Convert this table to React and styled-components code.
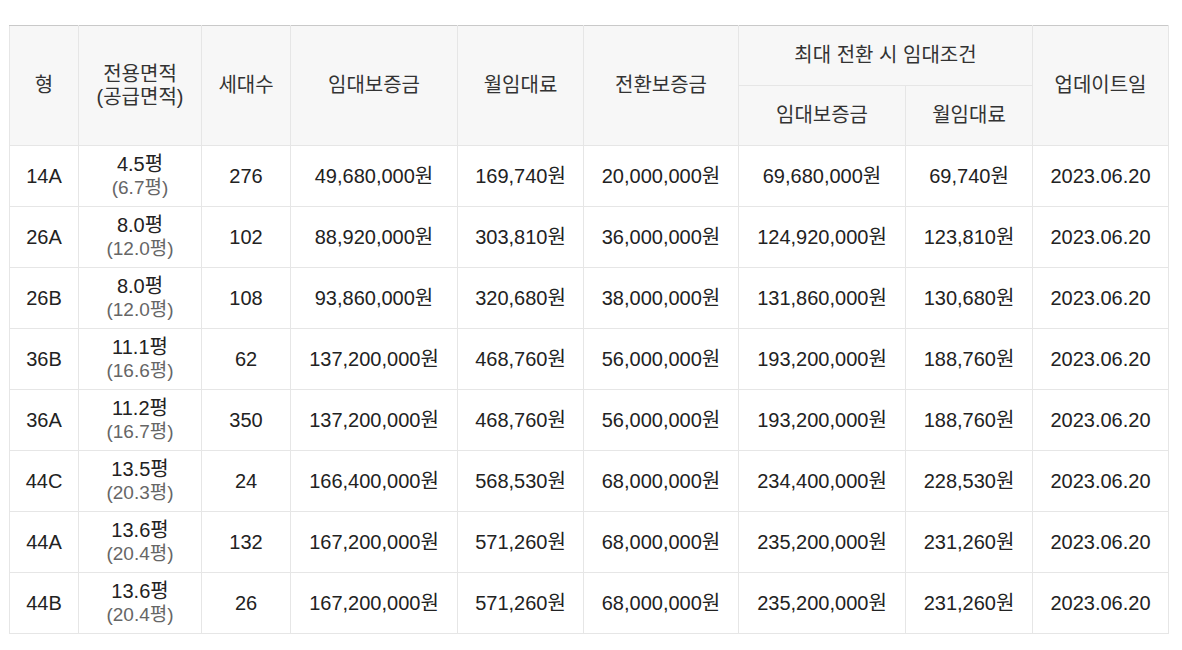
import React from 'react';
import styled, { createGlobalStyle } from 'styled-components';

const GlobalStyle = createGlobalStyle`
  body {
    margin: 0;
    background: #fff;
    font-family: "Liberation Sans", Arial, "Noto Sans CJK KR", sans-serif;
  }
`;

const Wrapper = styled.div`
  padding: 25px 14px 0 9px;
`;

const Table = styled.table`
  width: 1159px;
  border-collapse: collapse;
  table-layout: fixed;
  border-top: 1px solid #c9c9c9;
  color: #222;
  font-size: 20px;
`;

const Th = styled.th`
  height: ${(p) => p.$h || 59}px;
  padding: 0 4px;
  background: #f7f7f7;
  border: 1px solid #e6e6e6;
  border-top: ${(p) => (p.$top ? '1px solid #c9c9c9' : '1px solid #e6e6e6')};
  font-weight: normal;
  color: #333;
  line-height: 23px;
  text-align: center;
  vertical-align: middle;
`;

const Td = styled.td`
  height: 60px;
  padding: 0 4px;
  border: 1px solid #e6e6e6;
  text-align: center;
  vertical-align: middle;
  line-height: 23px;
  white-space: nowrap;
`;

const Sub = styled.div`
  font-size: 19px;
  color: #666;
`;

const widths = [69, 123, 89, 167, 126, 155, 167, 127, 136];

const rows = [
  ['14A', '4.5평', '6.7평', '276', '49,680,000원', '169,740원', '20,000,000원', '69,680,000원', '69,740원'],
  ['26A', '8.0평', '12.0평', '102', '88,920,000원', '303,810원', '36,000,000원', '124,920,000원', '123,810원'],
  ['26B', '8.0평', '12.0평', '108', '93,860,000원', '320,680원', '38,000,000원', '131,860,000원', '130,680원'],
  ['36B', '11.1평', '16.6평', '62', '137,200,000원', '468,760원', '56,000,000원', '193,200,000원', '188,760원'],
  ['36A', '11.2평', '16.7평', '350', '137,200,000원', '468,760원', '56,000,000원', '193,200,000원', '188,760원'],
  ['44C', '13.5평', '20.3평', '24', '166,400,000원', '568,530원', '68,000,000원', '234,400,000원', '228,530원'],
  ['44A', '13.6평', '20.4평', '132', '167,200,000원', '571,260원', '68,000,000원', '235,200,000원', '231,260원'],
  ['44B', '13.6평', '20.4평', '26', '167,200,000원', '571,260원', '68,000,000원', '235,200,000원', '231,260원'],
];

export default function App() {
  return (
    <Wrapper>
      <GlobalStyle />
      <Table>
        <colgroup>
          {widths.map((w, i) => (
            <col key={i} style={{ width: w }} />
          ))}
        </colgroup>
        <thead>
          <tr>
            <Th rowSpan={2} $top>형</Th>
            <Th rowSpan={2} $top>전용면적<br />(공급면적)</Th>
            <Th rowSpan={2} $top>세대수</Th>
            <Th rowSpan={2} $top>임대보증금</Th>
            <Th rowSpan={2} $top>월임대료</Th>
            <Th rowSpan={2} $top>전환보증금</Th>
            <Th colSpan={2} $top>최대 전환 시 임대조건</Th>
            <Th rowSpan={2} $top>업데이트일</Th>
          </tr>
          <tr>
            <Th>임대보증금</Th>
            <Th>월임대료</Th>
          </tr>
        </thead>
        <tbody>
          {rows.map((r) => (
            <tr key={r[0]}>
              <Td>{r[0]}</Td>
              <Td>
                {r[1]}
                <Sub>({r[2]})</Sub>
              </Td>
              <Td>{r[3]}</Td>
              <Td>{r[4]}</Td>
              <Td>{r[5]}</Td>
              <Td>{r[6]}</Td>
              <Td>{r[7]}</Td>
              <Td>{r[8]}</Td>
              <Td>2023.06.20</Td>
            </tr>
          ))}
        </tbody>
      </Table>
    </Wrapper>
  );
}
